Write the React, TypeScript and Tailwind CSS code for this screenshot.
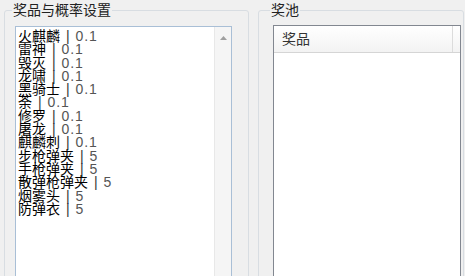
import React from "react";

const prizes = [
  ["火麒麟", "0.1"],
  ["雷神", "0.1"],
  ["毁灭", "0.1"],
  ["龙啸", "0.1"],
  ["黑骑士", "0.1"],
  ["荼", "0.1"],
  ["修罗", "0.1"],
  ["屠龙", "0.1"],
  ["麒麟刺", "0.1"],
  ["步枪弹夹", "5"],
  ["手枪弹夹", "5"],
  ["散弹枪弹夹", "5"],
  ["烟雾头", "5"],
  ["防弹衣", "5"],
];

const font = {
  fontFamily: '"Liberation Sans", "Noto Sans CJK SC", sans-serif',
};

export default function App() {
  return (
    <div
      className="w-[465px] h-[276px] bg-[#f0f0f0] overflow-hidden flex pt-[2px] text-[14px]"
      style={font}
    >
      {/* left group: prizes + probability */}
      <fieldset className="ml-[4px] w-[245px] h-[300px] shrink-0 border border-[#d8dde2] rounded-[3px] pl-[10px] pr-[16px]">
        <legend className="-ml-[3px] px-[1px] leading-[16px] text-[#222]">奖品与概率设置</legend>
        <div className="mt-[8px] h-[260px] border border-[#a9bfd6] bg-white flex">
          <div className="flex-1 pl-[2px] pt-[3px] leading-[13.3px] text-[14px]">
            {prizes.map(([name, p]) => (
              <div key={name} className="whitespace-nowrap h-[13.3px]">
                <span className="text-[#000]">{name}</span>
                <span className="text-[#333] px-[2px]"> | </span>
                <span className="text-[#555] tracking-[1px]">{p}</span>
              </div>
            ))}
          </div>
          {/* scrollbar */}
          <div className="w-[17px] bg-[#f5f5f5] border-l border-[#e8e8e8] flex flex-col items-center pt-[9px]">
            <svg width="7" height="4" viewBox="0 0 7 4">
              <path d="M0 4 L3.5 0 L7 4 Z" fill="#a0a0a0" />
            </svg>
          </div>
        </div>
      </fieldset>

      {/* right group: prize pool */}
      <fieldset className="ml-[9px] w-[206px] h-[300px] shrink-0 border border-[#d8dde2] rounded-[3px] pl-[14px] pr-[2px]">
        <legend className="-ml-[3px] px-[1px] leading-[16px] text-[#222]">奖池</legend>
        <div className="mt-[7px] w-[188px] h-[260px] border border-[#828790] bg-white flex flex-col">
          <div className="h-[27px] flex border-b border-[#d5d5d5] bg-gradient-to-b from-white to-[#f3f3f3]">
            <div className="w-[179px] border-r border-[#dcdcdc] pl-[8px] flex items-center text-[#333]">奖品</div>
            <div className="flex-1" />
          </div>
        </div>
      </fieldset>
    </div>
  );
}
